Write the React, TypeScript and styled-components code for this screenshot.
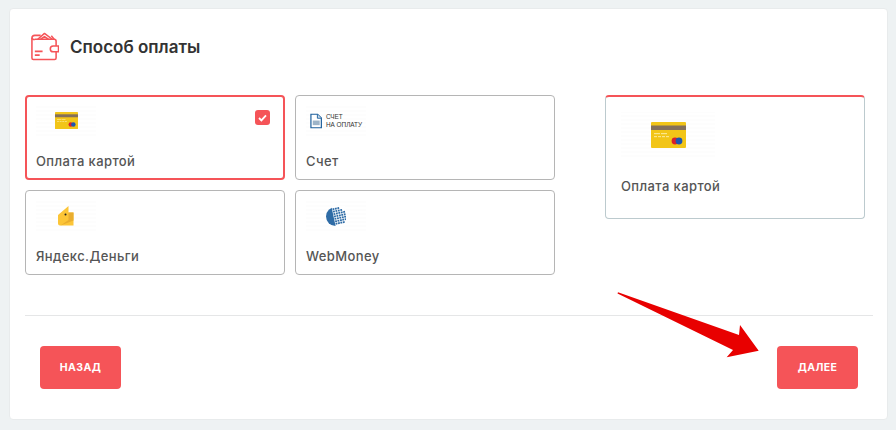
import React from 'react';
import styled, { createGlobalStyle } from 'styled-components';

const GlobalStyle = createGlobalStyle`
  html, body {
    margin: 0;
    padding: 0;
    background: #eef2f3;
    font-family: Inter, "Noto Sans", "Liberation Sans", sans-serif;
  }
`;

const WalletIcon = () => (
  <svg width="29" height="29" viewBox="0 0 30 30" fill="none" stroke="#f55458" strokeWidth="1.6" strokeLinejoin="round">
    <path d="M5 7.500 H25 a2 2 0 0 1 2 2 V27 a1.500 1.500 0 0 1 -1.500 1.500 H3.500 A1.500 1.500 0 0 1 2 27 V6.500 A3 3 0 0 1 5 3.500 H11" />
    <path d="M2 6 A2 2 0 0 0 5 7.500" />
    <path d="M8 7.500 L15 1.500 L23 7.500 M11 7.500 L15 4.800 L19 7.500" />
    <path d="M22 4 L25 7.500" />
    <path d="M29.500 14.500 H24 a3 3 0 0 0 0 6 H29.500 Z" fill="#fff" />
    <path d="M5 20 H13 M5 24 H10" strokeWidth="1.8" />
  </svg>
);

const CardLogo = ({ width }: { width: number }) => (
  <svg width={width} viewBox="0 0 35 26" style={{ display: 'block' }}>
    <rect x="0" y="0" width="35" height="26" rx="1" fill="#f2c518" />
    <rect x="0" y="3.500" width="35" height="4.500" fill="#84705a" />
    <rect x="3" y="11" width="6" height="1.200" fill="#fbe68a" />
    <rect x="10" y="11" width="6" height="1.200" fill="#fbe68a" />
    <rect x="3" y="14" width="3" height="1.200" fill="#fbe68a" />
    <rect x="7" y="14" width="3" height="1.200" fill="#fbe68a" />
    <rect x="11" y="14" width="3" height="1.200" fill="#fbe68a" />
    <rect x="15" y="14" width="3" height="1.200" fill="#fbe68a" />
    <circle cx="24" cy="19" r="3.400" fill="#d9202a" />
    <circle cx="28" cy="19" r="3.400" fill="#1d55b0" />
  </svg>
);

const InvoiceLogo = () => (
  <LogoRow>
    <svg width="12" height="16" viewBox="0 0 13 16">
      <path d="M1 .7 H8.200 L12.300 4.800 V15.300 H1 Z" fill="#fff" stroke="#1c5f9c" strokeWidth="1.3" />
      <path d="M8 .7 V5 H12.300" fill="#cfe0ee" stroke="#1c5f9c" strokeWidth="1" />
      <rect x="3" y="7.500" width="7.500" height="5" fill="#9db4c8" />
    </svg>
    <InvoiceText>
      СЧЕТ
      <br />
      НА ОПЛАТУ
    </InvoiceText>
  </LogoRow>
);

const YandexLogo = () => (
  <svg width="16" height="20" viewBox="0 0 16 20" style={{ display: 'block' }}>
    <path d="M0 9 L10.500 0 V6.500 H15.500 V19.500 H2 A2 2 0 0 1 0 17.500 Z" fill="#fcc537" />
    <path d="M10.500 6.500 H15.500 V14.500 L2.500 19.500 L10.500 14 Z" fill="#e9ad2f" />
    <circle cx="7.500" cy="8.500" r="1" fill="#222" />
  </svg>
);

// webmoney globe: blue squares with white gaps on the right of the disc
const cells: [number, number][] = [];
for (let col = 0; col < 5; col++) {
  for (let row = 0; row < 7; row++) {
    const x = 8.5 + col * 2.6;
    const y = 1.5 + row * 2.6;
    if (Math.hypot(x - 10, y - 10) < 10.5) cells.push([x, y]);
  }
}

const WebMoneyLogo = () => (
  <svg width="20" height="21" viewBox="0 0 21 21" style={{ display: 'block' }}>
    <circle cx="10" cy="10.500" r="10" fill="#2f6ca6" />
    <g transform="rotate(-12 10 10.500)">
      <rect x="8" y="-1" width="14" height="23" fill="#fff" />
      {cells.map(([x, y]) => (
        <rect key={`${x}-${y}`} x={x} y={y} width="1.900" height="1.900" fill="#2f6ca6" />
      ))}
    </g>
  </svg>
);

const options = [
  { title: 'Оплата картой', logo: <CardLogo width={23} />, selected: true },
  { title: 'Счет', logo: <InvoiceLogo />, selected: false },
  { title: 'Яндекс.Деньги', logo: <YandexLogo />, selected: false },
  { title: 'WebMoney', logo: <WebMoneyLogo />, selected: false },
];

export default function App() {
  return (
    <>
      <GlobalStyle />
      <Page>
        <Panel>
          <Header>
            <WalletIcon />
            <Title>Способ оплаты</Title>
          </Header>
          <Body>
            <OptionsGrid>
              {options.map((o) => (
                <Option key={o.title} $selected={o.selected}>
                  <LogoBox $w={60} $h={30}>{o.logo}</LogoBox>
                  <OptionLabel>{o.title}</OptionLabel>
                  {o.selected && (
                    <Check>
                      <svg width="9" height="8" viewBox="0 0 9 8" fill="none" stroke="#fff" strokeWidth="1.8">
                        <path d="M1 4 L3.400 6.400 L8 1.400" />
                      </svg>
                    </Check>
                  )}
                </Option>
              ))}
            </OptionsGrid>
            <Summary>
              <LogoBox $w={94} $h={45}>
                <CardLogo width={35} />
              </LogoBox>
              <SummaryLabel>Оплата картой</SummaryLabel>
            </Summary>
          </Body>
          <Footer>
            <ActionButton>НАЗАД</ActionButton>
            <ActionButton>ДАЛЕЕ</ActionButton>
          </Footer>
          <Arrow width="145" height="70" viewBox="0 0 145 70">
            <path d="M0 -0.800 L121 42 L122 32 L140.700 57.700 L108.700 64.300 L115 57 L-0.500 0.600 Z" fill="#e80000" />
          </Arrow>
        </Panel>
      </Page>
    </>
  );
}

const Page = styled.div`
  width: 896px;
  height: 430px;
  box-sizing: border-box;
  padding: 8px 8px 10px 9px;
  overflow: hidden;
`;

const Panel = styled.div`
  position: relative;
  box-sizing: border-box;
  width: 879px;
  height: 412px;
  background: #fff;
  border: 1px solid #e8ebec;
  border-radius: 4px;
  padding: 0 14px 0 15px;
`;

const Header = styled.div`
  display: flex;
  align-items: center;
  gap: 11px;
  height: 75px;
  margin-bottom: 11px;
  padding: 0 0 0 5px;
  box-sizing: border-box;
`;

const Title = styled.h2`
  margin: 0;
  font-size: 17px;
  font-weight: 600;
  color: #333;
`;

const Body = styled.div`
  display: flex;
  gap: 50px;
  height: 220px;
  border-bottom: 1px solid #e5e6e7;
`;

const OptionsGrid = styled.div`
  display: grid;
  grid-template-columns: 260px 260px;
  grid-auto-rows: 85px;
  gap: 10px;
`;

const Option = styled.div<{ $selected: boolean }>`
  position: relative;
  box-sizing: border-box;
  display: flex;
  flex-direction: column;
  justify-content: space-between;
  border: ${(p) => (p.$selected ? '2px solid #f55458' : '1px solid #b5b5b5')};
  border-radius: 4px;
  padding: ${(p) => (p.$selected ? '9px 9px 7px' : '10px 10px 8px')};
`;

const LogoBox = styled.div<{ $w: number; $h: number }>`
  width: ${(p) => p.$w}px;
  height: ${(p) => p.$h}px;
  display: flex;
  align-items: center;
  justify-content: center;
  background: repeating-linear-gradient(0deg, #fdfdfd 0 2px, #fff 2px 4px);
`;

const LogoRow = styled.div`
  display: flex;
  align-items: center;
  gap: 4px;
`;

const InvoiceText = styled.div`
  font-size: 6.4px;
  line-height: 8px;
  font-weight: 400;
  color: #333;
  white-space: nowrap;
  font-family: "Liberation Sans", sans-serif;
`;

const OptionLabel = styled.span`
  font-size: 13px;
  font-weight: 500;
  line-height: 20px;
  letter-spacing: 0.4px;
  color: #555;
`;

const Check = styled.span`
  position: absolute;
  top: 13px;
  right: 13px;
  width: 15px;
  height: 15px;
  border-radius: 3px;
  background: #f55458;
  display: flex;
  align-items: center;
  justify-content: center;
`;

const Summary = styled.div`
  box-sizing: border-box;
  width: 260px;
  height: 124px;
  border: 1px solid #bccace;
  border-top: 2px solid #f55458;
  border-radius: 4px;
  padding: 15px 15px 0;
`;

const SummaryLabel = styled(OptionLabel)`
  display: block;
  margin-top: 19px;
`;

const Footer = styled.div`
  display: flex;
  justify-content: space-between;
  padding: 30px 15px 0;
`;

const ActionButton = styled.button`
  width: 81px;
  height: 43px;
  border: 0;
  border-radius: 4px;
  background: #f55458;
  color: #fff;
  font-family: inherit;
  font-size: 10.5px;
  font-weight: 700;
  letter-spacing: 0.4px;
`;

const Arrow = styled.svg`
  position: absolute;
  left: 608px;
  top: 284px;
  overflow: visible;
`;
